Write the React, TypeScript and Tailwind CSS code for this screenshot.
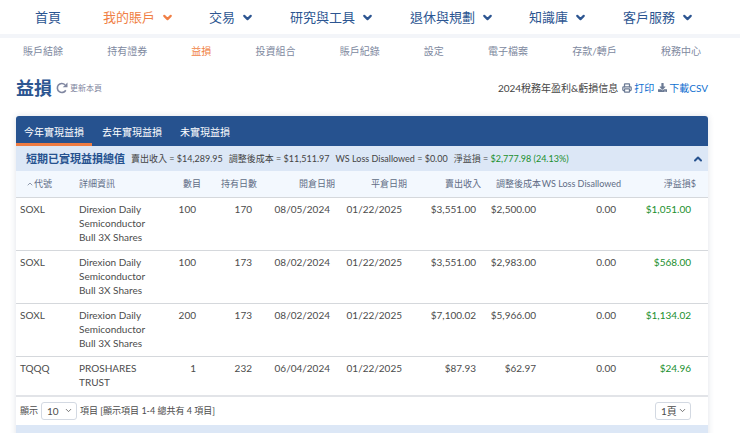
import { ChevronDown, ChevronUp, Printer } from "lucide-react";
import { FaDownload } from "react-icons/fa";

const mainNav = [
  { label: "首頁", menu: false },
  { label: "我的賬戶", menu: true, active: true },
  { label: "交易", menu: true },
  { label: "研究與工具", menu: true },
  { label: "退休與規劃", menu: true },
  { label: "知識庫", menu: true },
  { label: "客戶服務", menu: true },
];

const subNav = ["賬戶結餘", "持有證券", "益損", "投資組合", "賬戶紀錄", "設定", "電子檔案", "存款/轉戶", "稅務中心"];

const tabs = ["今年實現益損", "去年實現益損", "未實現益損"];

const numericHeads = ["數目", "持有日數", "開倉日期", "平倉日期", "賣出收入", "調整後成本", "WS Loss Disallowed"];

const rows = [
  { symbol: "SOXL", name: ["Direxion Daily", "Semiconductor", "Bull 3X Shares"], values: ["100", "170", "08/05/2024", "01/22/2025", "$3,551.00", "$2,500.00", "0.00"], gain: "$1,051.00" },
  { symbol: "SOXL", name: ["Direxion Daily", "Semiconductor", "Bull 3X Shares"], values: ["100", "173", "08/02/2024", "01/22/2025", "$3,551.00", "$2,983.00", "0.00"], gain: "$568.00" },
  { symbol: "SOXL", name: ["Direxion Daily", "Semiconductor", "Bull 3X Shares"], values: ["200", "173", "08/02/2024", "01/22/2025", "$7,100.02", "$5,966.00", "0.00"], gain: "$1,134.02" },
  { symbol: "TQQQ", name: ["PROSHARES", "TRUST"], values: ["1", "232", "06/04/2024", "01/22/2025", "$87.93", "$62.97", "0.00"], gain: "$24.96" },
];

function RefreshIcon() {
  return (
    <svg width="12" height="12" viewBox="0 0 24 24" fill="none" aria-hidden="true">
      <path d="M19.5 16.5A9 9 0 1 1 18 5.5" stroke="currentColor" strokeWidth="3.2" />
      <path d="M23 1v9.5h-9.5z" fill="currentColor" />
    </svg>
  );
}

function MainNav() {
  return (
    <nav className="border-b-4 border-[#f3f5f9] pl-[35px]">
      <ul className="grid h-[34px] grid-cols-[68fr_106fr_81fr_120fr_119fr_94fr_117fr] items-center text-[13px] leading-5">
        {mainNav.map((item) => (
          <li key={item.label}>
            <a href="#" className={`flex items-center gap-1.5 whitespace-nowrap ${item.active ? "text-[#f07f45]" : "text-[#2c5591]"}`}>
              {item.label}
              {item.menu && <ChevronDown size={13} strokeWidth={4} />}
            </a>
          </li>
        ))}
      </ul>
    </nav>
  );
}

function SubNav() {
  return (
    <nav className="pl-[23px] pr-[39px]">
      <ul className="flex h-[25px] items-center justify-between text-[10px] leading-4 text-[#8089a0]">
        {subNav.map((label) => (
          <li key={label}>
            <a href="#" className={label === "益損" ? "text-[#f07f45]" : ""}>{label}</a>
          </li>
        ))}
      </ul>
    </nav>
  );
}

function TitleBar() {
  return (
    <div className="flex h-[53px] items-center justify-between pb-1">
      <div className="flex items-center gap-1">
        <h1 className="text-[18px] font-bold leading-6 text-[#2c5591]">益損</h1>
        <button type="button" className="flex items-center gap-0.5 text-[8px] leading-3 text-[#7f86a0]">
          <RefreshIcon />
          更新本頁
        </button>
      </div>
      <div className="flex items-center gap-1 text-[10px] leading-4 text-[#444]">
        <span>2024稅務年盈利&amp;虧損信息</span>
        <a href="#" className="flex items-center gap-0.5 text-[#0f6fd0]">
          <Printer size={10} strokeWidth={3} className="text-[#6b7a94]" />
          打印
        </a>
        <a href="#" className="flex items-center gap-0.5 text-[#0f6fd0]">
          <FaDownload size={9} className="text-[#6b7a94]" />
          下載CSV
        </a>
      </div>
    </div>
  );
}

function Summary() {
  return (
    <div className="flex h-[25px] items-center gap-1.5 whitespace-nowrap bg-[#dce7f6] pl-2.5 pr-1 text-[9px] leading-4 text-[#444]">
      <h2 className="text-[11px] font-bold text-[#26528f]">短期已實現益損總值</h2>
      <span>賣出收入 = $14,289.95</span>
      <span>調整後成本 = $11,511.97</span>
      <span>WS Loss Disallowed = $0.00</span>
      <span>
        淨益損 = <span className="text-[#1a8f2e]">$2,777.98 (24.13%)</span>
      </span>
      <button type="button" aria-label="收起" className="ml-auto text-[#26528f]">
        <ChevronUp size={12} strokeWidth={4} />
      </button>
    </div>
  );
}

function LotsTable() {
  return (
    <table className="w-full table-fixed border-collapse text-[10px] leading-[14px] text-[#4c4c4c]">
      <colgroup>
        <col className="w-[63px]" />
        <col className="w-[71px]" />
        <col className="w-[51px]" />
        <col className="w-[56px]" />
        <col className="w-[78px]" />
        <col className="w-[72px]" />
        <col className="w-[74px]" />
        <col className="w-[60px]" />
        <col className="w-[80px]" />
        <col className="w-[87px]" />
      </colgroup>
      <thead className="bg-[#f3f8fe] text-[9px] text-[#5f6c85]">
        <tr className="h-[26px] whitespace-nowrap border-b border-[#d5d8dc]">
          <th className="pl-2.5 text-left font-normal">
            <button type="button" className="flex items-center">
              <ChevronUp size={8} strokeWidth={2} />
              代號
            </button>
          </th>
          <th className="text-left font-normal">詳細資訊</th>
          {numericHeads.map((head) => (
            <th key={head} className="text-right font-normal">{head}</th>
          ))}
          <th className="pr-3 text-right font-normal">淨益損$</th>
        </tr>
      </thead>
      <tbody>
        {rows.map((row, i) => (
          <tr key={i} className="border-b border-[#d5d8dc] align-top last:border-b-2 last:border-[#e2e4e8]">
            <td className="pb-1.5 pl-1 pt-1">{row.symbol}</td>
            <td className="whitespace-nowrap pb-1.5 pt-1">
              {row.name.map((line) => (
                <div key={line}>{line}</div>
              ))}
            </td>
            {row.values.map((value, j) => (
              <td key={j} className="pb-1.5 pr-[5px] pt-1 text-right">{value}</td>
            ))}
            <td className="pb-1.5 pr-[17px] pt-1 text-right text-[#1a8f2e]">{row.gain}</td>
          </tr>
        ))}
      </tbody>
    </table>
  );
}

function Picker({ label, value, options }: { label: string; value: string; options: string[] }) {
  return (
    <span className="relative inline-flex items-center">
      <select aria-label={label} defaultValue={value} className="h-[18px] w-9 appearance-none rounded-[3px] border border-[#d3d9e2] bg-white pl-[5px] text-[10px] leading-4">
        {options.map((option) => (
          <option key={option}>{option}</option>
        ))}
      </select>
      <ChevronDown size={9} className="pointer-events-none absolute right-1" />
    </span>
  );
}

function Pager() {
  return (
    <div className="flex h-7 items-center justify-between pl-1 pr-[17px] text-[9px] leading-4 text-[#4c4c4c]">
      <div className="flex items-center gap-[3px]">
        顯示
        <Picker label="每頁項目" value="10" options={["10", "25", "50"]} />
        項目 [顯示項目 1-4 總共有 4 項目]
      </div>
      <Picker label="頁數" value="1頁" options={["1頁"]} />
    </div>
  );
}

export default function App() {
  return (
    <div className="min-h-screen bg-white font-['Lato','Noto_Sans_CJK_TC',sans-serif]">
      <MainNav />
      <SubNav />
      <main className="pl-4 pr-8">
        <TitleBar />
        <section className="overflow-hidden rounded-t-[3px] shadow-[0_0_6px_rgba(40,60,100,0.15)]">
          <div className="flex h-[30px] gap-0.5 bg-[#26528f] text-[10px] leading-4 text-white" role="tablist">
            {tabs.map((tab, i) => (
              <button key={tab} type="button" role="tab" aria-selected={i === 0} className={`border-b-3 px-2 pt-1 ${i === 0 ? "border-[#ee7b42]" : "border-transparent"}`}>
                {tab}
              </button>
            ))}
          </div>
          <Summary />
          <LotsTable />
          <Pager />
          <div className="h-6 bg-[#dce7f6]" />
        </section>
      </main>
    </div>
  );
}
